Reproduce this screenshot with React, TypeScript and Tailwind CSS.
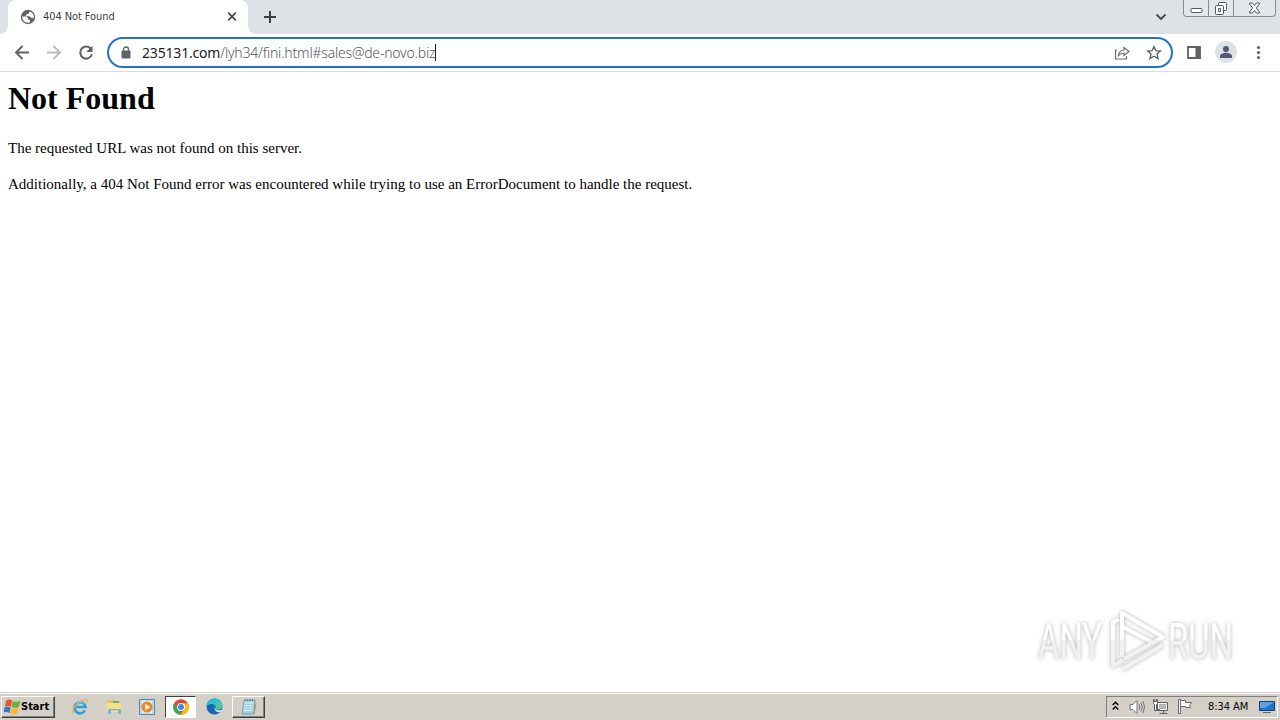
import type { ReactNode } from "react";
import clsx from "clsx";

const Globe = () => (
  <svg className="size-4" viewBox="0 0 16 16">
    <circle cx="8" cy="8" r="7.200" fill="#5f6368" />
    <path
      d="M2.300 7.500h4.200l1.700 1.700v1.600h1.600v2.700C5.500 14.600 2 11.500 2.300 7.500z"
      fill="#fff"
    />
    <path
      d="M9.300 2.400v1.300L8 5H6.500v1.500H5.300L6 7.300h3.500L11 8.800h1.500l1 1c1.200-3.200-.7-6.700-4.200-7.400z"
      fill="#fff"
    />
  </svg>
);

const Stroke = ({
  d,
  color = "#5f6368",
  width = 2,
  className = "size-4",
}: {
  d: string;
  color?: string;
  width?: number;
  className?: string;
}) => (
  <svg className={className} viewBox="0 0 16 16" fill="none" stroke={color} strokeWidth={width}>
    <path d={d} />
  </svg>
);

const WindowControls = () => (
  <div className="flex h-[17px] w-[93px] rounded-b-[4px] border border-t-0 border-[#858a94] bg-[#e3e6eb]">
    <div className="flex w-[25px] items-center justify-center border-r border-[#858a94] pt-1">
      <svg className="h-[5px] w-[13px]" viewBox="0 0 13 5">
        <rect x="1" y=".5" width="11" height="4" rx="1" fill="#fff" stroke="#535666" />
      </svg>
    </div>
    <div className="flex w-[25px] items-center justify-center border-r border-[#858a94]">
      <svg className="mt-px h-[13px] w-[14px]" viewBox="0 0 14 13" fill="#fff" stroke="#535666">
        <rect x="4.500" y=".5" width="8" height="8" rx="1" />
        <rect x="1.500" y="3.500" width="8" height="9" rx="1" />
        <path d="M4.500 6.500h2v3h-2z" />
      </svg>
    </div>
    <div className="flex flex-1 items-center justify-center">
      <svg className="h-[12px] w-[13px]" viewBox="0 0 13 12">
        <path
          d="M1.500 1h3l2 2.500 2-2.500h3v1L8.300 6l3.200 4v1h-3l-2-2.500-2 2.500h-3v-1l3.200-4-3.200-4z"
          fill="#fff"
          stroke="#535666"
        />
      </svg>
    </div>
  </div>
);

const TabStrip = () => (
  <div className="flex h-[34px] bg-[#dee1e6]">
    <div className="flex w-2 bg-white">
      <div className="w-full rounded-br-[8px] bg-[#dee1e6]" />
    </div>
    <div className="flex w-[240px] items-center rounded-t-[8px] bg-white pl-3">
      <Globe />
      <span className="mt-px ml-[7px] flex-1 font-['DejaVu_Sans_Condensed','DejaVu_Sans',sans-serif] text-[11px] tracking-[-0.08px] whitespace-nowrap text-[#3c4043] [font-stretch:condensed]">
        404 Not Found
      </span>
      <Stroke d="M4.200 3.700l7.600 7.600M11.800 3.700l-7.600 7.600" color="#45494d" width={1.700} className="mr-2 size-4" />
    </div>
    <div className="flex w-2 bg-white">
      <div className="w-full rounded-bl-[8px] bg-[#dee1e6]" />
    </div>
    <Stroke d="M8 2v12M2 8h12" color="#3c4043" className="mt-[9px] ml-[6px] size-4" />
    <Stroke d="M3.500 5.500L8 10l4.500-4.500" color="#45494d" width={1.800} className="mt-[9px] mr-[14px] ml-auto size-4" />
    <div className="w-[97px]">
      <WindowControls />
    </div>
  </div>
);

const Toolbar = () => (
  <div className="flex h-[38px] items-center border-b border-[#dadce0] bg-white">
    <Stroke d="M15 7.500H2M8.500 1L2 7.500 8.500 14" className="ml-[14px] size-4" width={1.900} />
    <Stroke d="M1 7.500h13M7.500 1L14 7.500 7.500 14" color="#b9bbbe" className="ml-4 size-4" width={1.900} />
    <svg className="ml-4 size-4" viewBox="0 0 16 16">
      <path d="M13.200 4.200A6 6 0 1 0 14 9.300" fill="none" stroke="#5f6368" strokeWidth="2" />
      <path d="M14.500 .800v6.200H8.300z" fill="#5f6368" />
    </svg>
    <div className="ml-[13px] flex h-[31px] w-[1066px] items-center rounded-full border-2 border-[#2870cf] pr-[9px] pl-[12px]">
      <svg className="mb-px h-[13px] w-[10px]" viewBox="0 0 10 13">
        <path d="M2.500 6V3.500a2.500 2.500 0 0 1 5 0V6" fill="none" stroke="#5f6368" strokeWidth="1.400" />
        <rect x=".5" y="4.500" width="9" height="8" rx="1" fill="#5f6368" />
      </svg>
      <div className="ml-[11px] flex flex-1 items-center font-['Noto_Sans',sans-serif] text-[14px] whitespace-nowrap text-[#54585c]">
        <span className="tracking-[-0.18px] text-[#202124]">235131.com</span>
        <span className="font-light tracking-[-0.2px]">/lyh34/fini.html#sales@de-novo.biz</span>
        <span className="h-[17px] w-px bg-[#202124]" />
      </div>
      <svg className="mr-4 size-4" viewBox="0 0 16 16" fill="none" stroke="#696c70" strokeWidth="1.200">
        <path d="M3 5H1.500v9h11v-3" />
        <path d="M4.500 10.500C5 7 7 5 10 5V2.500L15 6.500l-5 4V8c-2.500 0-4 .8-5.500 2.500z" />
      </svg>
      <svg className="size-4" viewBox="0 0 16 16" fill="none" stroke="#5f6368" strokeWidth="1.400">
        <path d="M8 1.500l1.900 4.200 4.500.4L11 9.100l1 4.500-4-2.400-4 2.400 1-4.500-3.400-3 4.500-.4z" />
      </svg>
    </div>
    <svg className="ml-[13px] size-4" viewBox="0 0 16 16">
      <path d="M2 2h12v11H2z" fill="none" stroke="#5f6368" strokeWidth="1.800" />
      <path d="M9.500 1.500h5v12h-5z" fill="#5f6368" />
    </svg>
    <svg className="mb-px ml-[13px] size-[22px]" viewBox="0 0 22 22">
      <circle cx="11" cy="11" r="11" fill="#dee1e6" />
      <circle cx="11" cy="8" r="3" fill="#515a70" />
      <path d="M5 17v-1.800c0-2.200 3.500-3.400 6-3.400s6 1.200 6 3.400V17z" fill="#515a70" />
    </svg>
    <svg className="ml-[13px] size-4" viewBox="0 0 16 16" fill="#5f6368">
      <circle cx="8.500" cy="2.500" r="1.600" />
      <circle cx="8.500" cy="7.500" r="1.600" />
      <circle cx="8.500" cy="12.500" r="1.600" />
    </svg>
  </div>
);

const Watermark = () => (
  <svg
    className="absolute right-[28px] bottom-[17px] h-[72px] w-[220px] overflow-visible drop-shadow-[0_0_2px_rgba(0,0,0,0.3)]"
    viewBox="0 0 220 72"
  >
    <defs>
      <linearGradient id="shine" gradientUnits="userSpaceOnUse" x1="0" y1="0" x2="0" y2="72">
        <stop offset="52%" stopColor="#ffffff" />
        <stop offset="52%" stopColor="#f1f1f1" />
      </linearGradient>
    </defs>
    <g fill="url(#shine)" fontFamily="Roboto, sans-serif" fontSize="50">
      <text x="6" y="56" textLength="64" lengthAdjust="spacingAndGlyphs">
        ANY
      </text>
      <text x="136" y="56" textLength="65" lengthAdjust="spacingAndGlyphs">
        RUN
      </text>
    </g>
    <g fill="none" stroke="url(#shine)" strokeWidth="4" strokeLinejoin="round">
      <path d="M90 54V10l41 24-39 22" />
      <path d="M91 24l32 17M131 42L91 66" />
      <path d="M87 16l-6 3v44l10-6" />
    </g>
  </svg>
);

const Raised = ({ className, children }: { className?: string; children: ReactNode }) => (
  <div
    className={clsx(
      "flex h-[22px] items-center border border-t-white border-r-[#404040] border-b-[#404040] border-l-white shadow-[inset_-1px_-1px_#808080]",
      className,
    )}
  >
    {children}
  </div>
);

const WindowsLogo = () => (
  <svg className="h-4 w-[17px]" viewBox="1 1 15.500 14">
    <path d="M3 2c2-1 3.500-1 5.500 0L7.300 7.700C5.500 6.700 3.800 6.800 1.800 7.700z" fill="#e65427" />
    <path d="M9.200 2.500c2 1 3.700 1 6.800-.2L14.500 7.900c-2.500 1.200-4.300 1-6.500.1z" fill="#72ad31" />
    <path d="M1.500 8.500c2-1 3.700-1 5.700-.1l-1.300 5c-2-1-3.500-1-5.600 0z" fill="#3479c9" />
    <path d="M7.800 8.800c2 1 3.900 1 6.500 0L13 13.800c-2.500 1.200-4.300 1-6.500 0z" fill="#f4ba2c" />
  </svg>
);

const InternetExplorer = () => (
  <svg className="size-[18px]" viewBox="0 0 18 18" fill="none">
    <path d="M14 12.300A5.500 5.500 0 1 1 14.500 9H5" stroke="#2f9fdc" strokeWidth="2.600" />
    <path d="M2.500 15.500C-1 15 4 6 10 3c4-2.500 7-2.200 6 1" stroke="#e5b642" strokeWidth="1.400" />
    <path d="M5 6.500c2-3 6-3 8 0" stroke="#7fcdf1" />
  </svg>
);

const Explorer = () => (
  <svg className="size-[18px]" viewBox="0 0 18 18">
    <path d="M2 2h6l1 2h6v10H2z" fill="#e5bf5d" />
    <path d="M2 5h14v9H2z" fill="#f8e59b" />
    <path d="M8 3h6v2H8z" fill="#68b46a" />
    <path d="M3 10h13v6h-3v-3.500H6V16H3z" fill="#76b9df" />
    <path d="M1.500 6.500h15V11h-15z" fill="#f6dc83" />
  </svg>
);

const MediaPlayer = () => (
  <svg className="size-4" viewBox="0 0 16 16">
    <path d="M.5.500h15v15H.5z" fill="#b9d7ed" stroke="#508bb9" />
    <path d="M3 2h10v12H3z" fill="#e4eff7" />
    <circle cx="8" cy="8" r="5.500" fill="#ed861c" />
    <path d="M6.300 4.700l5 3.300-5 3.300z" fill="#fff" />
  </svg>
);

const Chrome = () => (
  <svg className="size-4" viewBox="0 0 16 16">
    <circle cx="8" cy="8" r="7.800" fill="#e94235" />
    <path d="M1.250 4.100L4.900 10 8 11.500 7.500 15.800A7.800 7.800 0 0 1 1.250 4.100z" fill="#34a853" />
    <path d="M8 4.300h6.850a7.800 7.800 0 0 1-7.350 11.500L11.300 9.800z" fill="#fbbc04" />
    <circle cx="8" cy="8" r="3.900" fill="#fff" />
    <circle cx="8" cy="8" r="3" fill="#4285f4" />
  </svg>
);

const Edge = () => (
  <svg className="size-[17px]" viewBox="0 0 17 17">
    <circle cx="8.500" cy="8.500" r="8" fill="#1767b5" />
    <path d="M.6 8C1 3.200 4.500.5 8.500.5c5 0 8 3.400 8 7 0 3-2 4.300-4.500 4.300-2 0-3-.8-2-2C10 6 5 4.500.6 8z" fill="#4ac8a0" />
    <path d="M.6 8C1 3.200 4.500.5 8.500.5c3 0 5 1.200 6.500 3C11 2.500 9.500 5 9.500 7 7.500 5 3 5 .6 8z" fill="#2db9df" />
    <path d="M9.500 7.500c-1.500 3 1 5.300 4.500 4.800 1 0 2-.4 2.400-.9-.5 1.500-1.500 2.400-2.400 2.900-4 .3-7-3.300-4.500-6.800z" fill="#d4e3ee" />
  </svg>
);

const Notepad = () => (
  <svg className="size-[18px]" viewBox="0 0 18 18">
    <path d="M4 2h11l-1 14H2z" fill="#9bcfdf" stroke="#6d97a5" strokeWidth=".8" />
    <path d="M4.500 5h9M4 7.500h9M3.800 10h9M3.500 12.500h9" stroke="#e2f2f6" />
    <path d="M5 1v2M7.500 1v2M10 1v2M12.500 1v2" stroke="#687d83" />
    <path d="M14 16l2-11" stroke="#b1935c" />
  </svg>
);

const Tray = () => (
  <div className="mr-[2px] ml-auto flex h-[22px] w-[172px] items-center border border-t-[#808080] border-r-white border-b-white border-l-[#808080] pl-[5px]">
    <svg className="mb-px h-3 w-[7px]" viewBox="0 0 7 12" fill="none" stroke="#000" strokeWidth="1.500">
      <path d="M.7 5l2.800-2.800L6.300 5M.7 9.500l2.800-2.800 2.800 2.800" />
    </svg>
    <svg className="ml-[10px] size-4" viewBox="0 0 16 16" fill="#fff" stroke="#777" strokeWidth="1">
      <path d="M1 5.500h3l4-4v13l-4-4H1z" />
      <path d="M10 5q1.500 3 0 6M12 3.500q2.500 4.500 0 9M14 2q3 6 0 12" fill="none" />
    </svg>
    <svg className="ml-[7px] size-[17px]" viewBox="0 0 17 17" fill="#fff" stroke="#5b5b5b">
      <path d="M5.500 4.500h10v8h-10zM7.500 15.500h8M11.500 13v2" />
      <path d="M7.500 6.500h6v4h-6z" fill="#bbb" stroke="#aaa" />
      <path d="M1.500 1.500h1v2h2v-2h1v4l-1 1v5h3v1h-5v-6l-1-1z" />
    </svg>
    <svg className="ml-[8px] size-[17px]" viewBox="0 0 17 17" fill="#fff" stroke="#686868">
      <path d="M1.500 1.500h2v14h-2z" />
      <path d="M3.500 2.500h5v2h6l-2 3 1 2h-5v-1h-5z" />
    </svg>
    <span className="mt-px ml-[14px] w-[44px] font-['DejaVu_Sans_Condensed','DejaVu_Sans',sans-serif] text-[11px] tracking-[-0.05px] whitespace-nowrap text-black [font-stretch:condensed]">
      8:34 AM
    </span>
    <svg className="ml-[7px] h-[14px] w-4" viewBox="0 0 16 14">
      <path d="M.5 1.500h15v9H.5z" fill="#2472c4" stroke="#173e7c" />
      <path d="M1 2h14L6 8H1z" fill="#59a4e0" />
      <path d="M4 12h8v1H4z" fill="#536c86" />
    </svg>
  </div>
);

const Taskbar = () => (
  <div className="flex h-[28px] items-center border-t border-[#d4d0c8] bg-[#d4d0c8] shadow-[inset_0_1px_#fff]">
    <Raised className="ml-[1px] w-[54px] pl-[2px]">
      <WindowsLogo />
      <span className="mt-px font-['DejaVu_Sans_Condensed','DejaVu_Sans',sans-serif] text-[11px] font-bold text-black [font-stretch:condensed]">
        Start
      </span>
    </Raised>
    <div className="ml-[16px] flex items-center gap-4">
      <InternetExplorer />
      <Explorer />
      <MediaPlayer />
    </div>
    <div className="ml-[10px] flex h-[22px] w-[31px] items-center justify-center border border-t-[#404040] border-r-white border-b-white border-l-[#404040] bg-white">
      <Chrome />
    </div>
    <div className="mr-[9px] ml-[10px]">
      <Edge />
    </div>
    <Raised className="w-[33px] justify-center">
      <Notepad />
    </Raised>
    <Tray />
  </div>
);

export default function App() {
  return (
    <div className="flex h-screen w-screen flex-col overflow-hidden bg-white">
      <TabStrip />
      <Toolbar />
      <main className="relative flex-1 px-2 pt-[8px] font-['Liberation_Serif',serif] text-black">
        <h1 className="text-[32px] leading-[36px] font-bold">Not Found</h1>
        <p className="mt-[23px] text-[15px] leading-[18px]">
          The requested URL was not found on this server.
        </p>
        <p className="mt-[18px] text-[15px] leading-[18px]">
          Additionally, a 404 Not Found error was encountered while trying to use an ErrorDocument to handle the request.
        </p>
        <Watermark />
      </main>
      <Taskbar />
    </div>
  );
}
